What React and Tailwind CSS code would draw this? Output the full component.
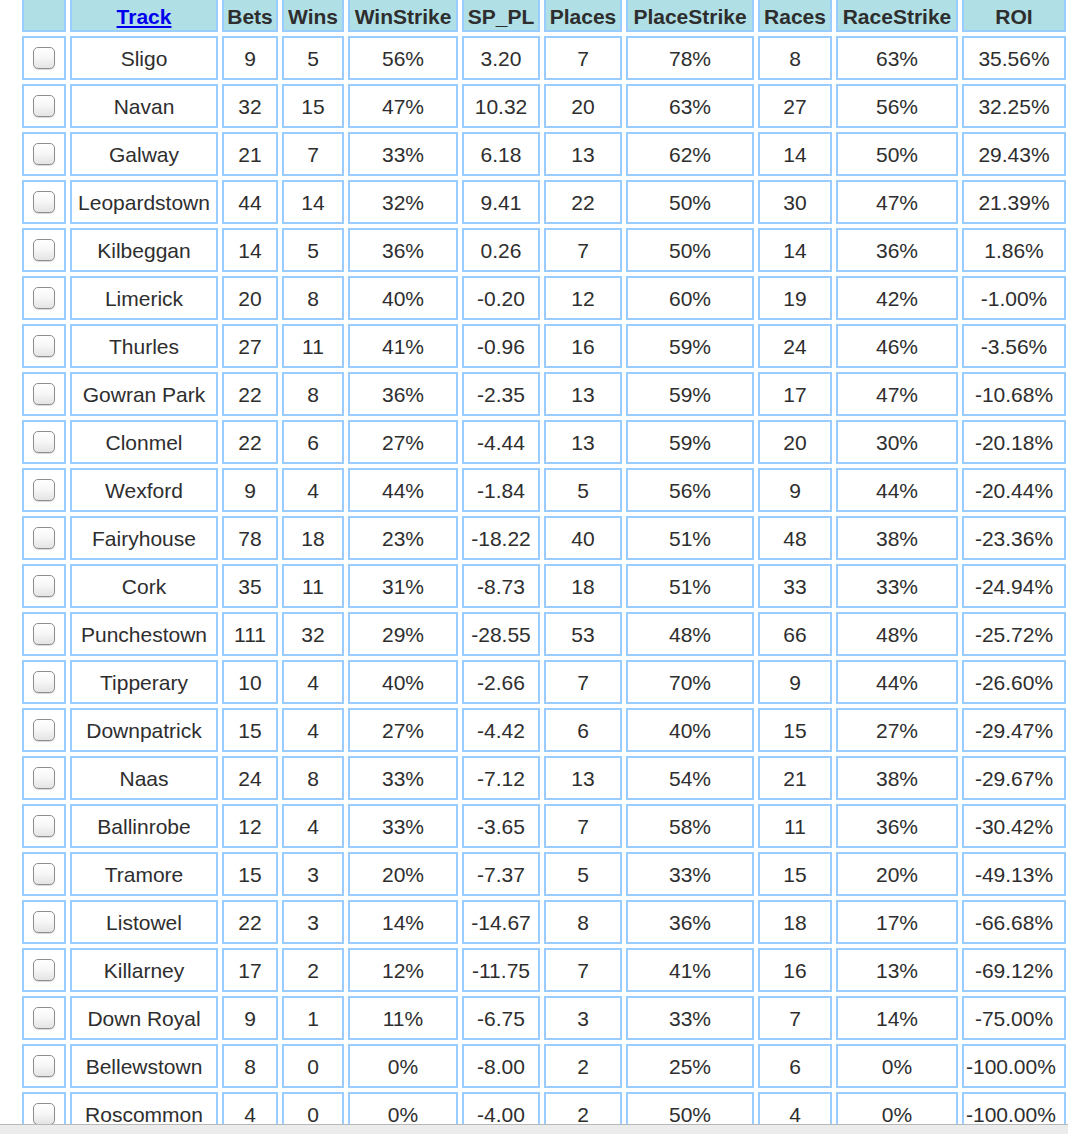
import React from "react";

const columns = [
  { key: "cb", label: "", w: "w-[44px]" },
  { key: "track", label: "Track", w: "w-[148px]" },
  { key: "bets", label: "Bets", w: "w-[56px]" },
  { key: "wins", label: "Wins", w: "w-[62px]" },
  { key: "winStrike", label: "WinStrike", w: "w-[110px]" },
  { key: "spPl", label: "SP_PL", w: "w-[78px]" },
  { key: "places", label: "Places", w: "w-[78px]" },
  { key: "placeStrike", label: "PlaceStrike", w: "w-[128px]" },
  { key: "races", label: "Races", w: "w-[74px]" },
  { key: "raceStrike", label: "RaceStrike", w: "w-[122px]" },
  { key: "roi", label: "ROI", w: "w-[104px]" },
];

// track, bets, wins, winStrike, spPl, places, placeStrike, races, raceStrike, roi
const rows = [
  ["Sligo", 9, 5, "56%", "3.20", 7, "78%", 8, "63%", "35.56%"],
  ["Navan", 32, 15, "47%", "10.32", 20, "63%", 27, "56%", "32.25%"],
  ["Galway", 21, 7, "33%", "6.18", 13, "62%", 14, "50%", "29.43%"],
  ["Leopardstown", 44, 14, "32%", "9.41", 22, "50%", 30, "47%", "21.39%"],
  ["Kilbeggan", 14, 5, "36%", "0.26", 7, "50%", 14, "36%", "1.86%"],
  ["Limerick", 20, 8, "40%", "-0.20", 12, "60%", 19, "42%", "-1.00%"],
  ["Thurles", 27, 11, "41%", "-0.96", 16, "59%", 24, "46%", "-3.56%"],
  ["Gowran Park", 22, 8, "36%", "-2.35", 13, "59%", 17, "47%", "-10.68%"],
  ["Clonmel", 22, 6, "27%", "-4.44", 13, "59%", 20, "30%", "-20.18%"],
  ["Wexford", 9, 4, "44%", "-1.84", 5, "56%", 9, "44%", "-20.44%"],
  ["Fairyhouse", 78, 18, "23%", "-18.22", 40, "51%", 48, "38%", "-23.36%"],
  ["Cork", 35, 11, "31%", "-8.73", 18, "51%", 33, "33%", "-24.94%"],
  ["Punchestown", 111, 32, "29%", "-28.55", 53, "48%", 66, "48%", "-25.72%"],
  ["Tipperary", 10, 4, "40%", "-2.66", 7, "70%", 9, "44%", "-26.60%"],
  ["Downpatrick", 15, 4, "27%", "-4.42", 6, "40%", 15, "27%", "-29.47%"],
  ["Naas", 24, 8, "33%", "-7.12", 13, "54%", 21, "38%", "-29.67%"],
  ["Ballinrobe", 12, 4, "33%", "-3.65", 7, "58%", 11, "36%", "-30.42%"],
  ["Tramore", 15, 3, "20%", "-7.37", 5, "33%", 15, "20%", "-49.13%"],
  ["Listowel", 22, 3, "14%", "-14.67", 8, "36%", 18, "17%", "-66.68%"],
  ["Killarney", 17, 2, "12%", "-11.75", 7, "41%", 16, "13%", "-69.12%"],
  ["Down Royal", 9, 1, "11%", "-6.75", 3, "33%", 7, "14%", "-75.00%"],
  ["Bellewstown", 8, 0, "0%", "-8.00", 2, "25%", 6, "0%", "-100.00%"],
  ["Roscommon", 4, 0, "0%", "-4.00", 2, "50%", 4, "0%", "-100.00%"],
];

function Checkbox() {
  return (
    <span className="mx-auto block w-[22px] h-[22px] rounded-[5px] border border-[#8e8e8e] bg-gradient-to-b from-white via-[#f6f6f6] to-[#e4e4e4] shadow-[0_1px_1px_rgba(0,0,0,0.15)]" />
  );
}

export default function App() {
  return (
    <div
      className="w-[1068px] h-[1134px] flex flex-col bg-white overflow-hidden text-[#2e2e2e]"
      style={{ fontFamily: "'Liberation Sans', Arial, Helvetica, sans-serif" }}
    >
      <div className="flex-1 overflow-hidden pl-[18px]">
        <table className="table-fixed border-separate border-spacing-1 w-[1052px] -mt-[6px] text-[21px] leading-none">
          <thead>
            <tr>
              {columns.map((c) => (
                <th
                  key={c.key}
                  className={`${c.w} h-[34px] pt-[3px] px-0.5 border-2 border-[#99ccff] bg-[#b0e0e6] font-bold text-center align-middle whitespace-nowrap`}
                >
                  {c.key === "track" ? (
                    <a href="#" className="text-[#0000ee] underline">
                      {c.label}
                    </a>
                  ) : (
                    c.label
                  )}
                </th>
              ))}
            </tr>
          </thead>
          <tbody>
            {rows.map((r) => (
              <tr key={r[0]}>
                <td className="h-[44px] border-2 border-[#99ccff] align-middle">
                  <Checkbox />
                </td>
                {r.map((v, i) => (
                  <td
                    key={i}
                    className={`h-[44px] px-0.5 border-2 border-[#99ccff] align-middle whitespace-nowrap ${
                      v === "-100.00%" ? "text-left" : "text-center"
                    }`}
                  >
                    {v}
                  </td>
                ))}
              </tr>
            ))}
          </tbody>
        </table>
      </div>
      <div className="h-[10px] shrink-0 border-t border-[#b8b8b8] bg-[#ececec]" />
    </div>
  );
}
